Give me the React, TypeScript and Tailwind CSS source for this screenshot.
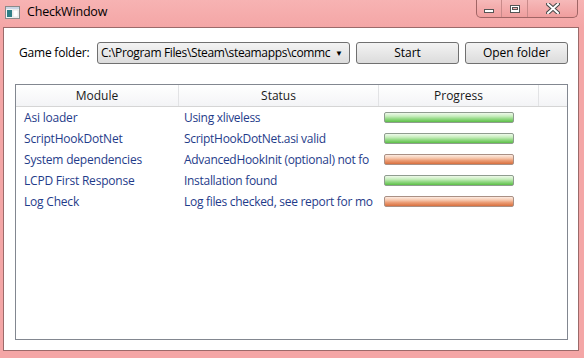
import React from "react";

const rows = [
  { module: "Asi loader", status: "Using xliveless", ok: true },
  { module: "ScriptHookDotNet", status: "ScriptHookDotNet.asi valid", ok: true },
  { module: "System dependencies", status: "AdvancedHookInit (optional) not fo", ok: false },
  { module: "LCPD First Response", status: "Installation found", ok: true },
  { module: "Log Check", status: "Log files checked, see report for mo", ok: false },
];

function AppIcon() {
  return (
    <svg width="15" height="13" viewBox="0 0 15 13">
      <rect x="0.5" y="0.5" width="14" height="12" fill="#f4f4f4" stroke="#8a8a8a" />
      <rect x="1" y="1" width="13" height="2" fill="#c9d6e6" />
      <rect x="2" y="4" width="5" height="7" fill="#2f7f86" />
      <rect x="8" y="4" width="5" height="7" fill="#ffffff" stroke="#d0d0d0" strokeWidth="0.5" />
    </svg>
  );
}

function CaptionButtons() {
  return (
    <div className="flex h-[18px] self-start mr-[6px] border border-t-0 border-[#a06565] rounded-b-[5px] overflow-hidden bg-gradient-to-b from-[#f6b9b9] to-[#f09e9e]">
      <div className="w-[25px] flex items-center justify-center border-r border-[#c98a8a]">
        <div className="w-[10px] h-[4px] mt-[4px] bg-white border border-[#555]" />
      </div>
      <div className="w-[26px] flex items-center justify-center border-r border-[#c98a8a]">
        <div className="w-[10px] h-[8px] bg-white border border-[#555] flex items-center justify-center">
          <div className="w-[6px] h-[3px] border border-[#555] bg-[#f3b0b0]" />
        </div>
      </div>
      <div className="w-[49px] flex items-center justify-center">
        <svg width="14" height="11" viewBox="0 0 14 11">
          <path d="M2 1 L12 10 M12 1 L2 10" stroke="#4a4a4a" strokeWidth="4" strokeLinecap="square" />
          <path d="M2 1 L12 10 M12 1 L2 10" stroke="#ffffff" strokeWidth="2" strokeLinecap="square" />
        </svg>
      </div>
    </div>
  );
}

function Bar({ ok }: { ok: boolean }) {
  return (
    <div
      className={
        ok
          ? "w-[130px] h-[11px] rounded-[2px] border border-[#8f9c8f] bg-[linear-gradient(to_bottom,#eef9ea_0%,#c8eebe_35%,#9bdc8d_60%,#5cbf47_100%)]"
          : "w-[130px] h-[11px] rounded-[2px] border border-[#a99085] bg-[linear-gradient(to_bottom,#fdebe1_0%,#f6c8ae_35%,#ec9f78_60%,#d8703f_100%)]"
      }
    />
  );
}

export default function App() {
  return (
    <div
      className="w-[584px] h-[358px] flex flex-col bg-[#f4a6a6] text-[12px] text-black overflow-hidden"
      style={{ fontFamily: '"Open Sans", "Noto Sans", sans-serif' }}
    >
      {/* Title bar */}
      <div className="h-[27px] flex items-start bg-gradient-to-b from-[#f7b3b3] to-[#f4a6a6]">
        <div className="flex items-center h-[24px] pl-[5px] gap-[7px]">
          <AppIcon />
          <span className="text-[12.5px] tracking-[-0.2px]">CheckWindow</span>
        </div>
        <div className="ml-auto flex">
          <CaptionButtons />
        </div>
      </div>

      {/* Client area */}
      <div className="flex-1 ml-[3px] mr-[5px] mb-[7px] border border-[#9b6a6a] bg-white flex flex-col">
        <div className="flex items-center h-[22px] mt-[14px] pl-[15px] pr-[10px]">
          <span className="w-[78px] whitespace-nowrap tracking-[-0.2px]">Game folder:</span>
          <div className="w-[253px] h-[22px] flex items-center border border-[#707070] rounded-[3px] bg-gradient-to-b from-[#f3f3f3] to-[#dcdcdc] pl-[3px] pr-[6px]">
            <span className="flex-1 whitespace-nowrap tracking-[-0.35px]">
              C:\Program Files\Steam\steamapps\commc
            </span>
            <span className="text-[8px] ml-[2px]">▼</span>
          </div>
          <div className="w-[103px] h-[22px] ml-[6px] flex items-center justify-center border border-[#707070] rounded-[3px] bg-gradient-to-b from-[#f3f3f3] to-[#dcdcdc]">
            Start
          </div>
          <div className="w-[103px] h-[22px] ml-[6px] flex items-center justify-center border border-[#707070] rounded-[3px] bg-gradient-to-b from-[#f3f3f3] to-[#dcdcdc]">
            Open folder
          </div>
        </div>

        {/* List view */}
        <div className="ml-[11px] mr-[10px] mt-[20px] mb-[10px] flex-1 border border-[#828790] flex flex-col">
          <div className="h-[22px] flex bg-gradient-to-b from-[#ffffff] to-[#f3f4f6] border-b border-[#d5d5d5] text-[#1a1a1a]">
            <div className="w-[163px] flex items-center justify-center border-r border-[#e2e3e5]">Module</div>
            <div className="w-[200px] flex items-center justify-center border-r border-[#e2e3e5]">Status</div>
            <div className="w-[160px] flex items-center justify-center border-r border-[#e2e3e5]">Progress</div>
            <div className="flex-1" />
          </div>
          <div className="flex flex-col text-[#1f3c8a]">
            {rows.map((r) => (
              <div key={r.module} className="h-[21px] flex items-center">
                <div className="w-[163px] pl-[8px] whitespace-nowrap tracking-[-0.2px]">{r.module}</div>
                <div className="w-[200px] pl-[5px] whitespace-nowrap tracking-[-0.3px]">{r.status}</div>
                <div className="w-[160px] pl-[5px] flex items-center">
                  <Bar ok={r.ok} />
                </div>
              </div>
            ))}
          </div>
        </div>
      </div>
    </div>
  );
}
